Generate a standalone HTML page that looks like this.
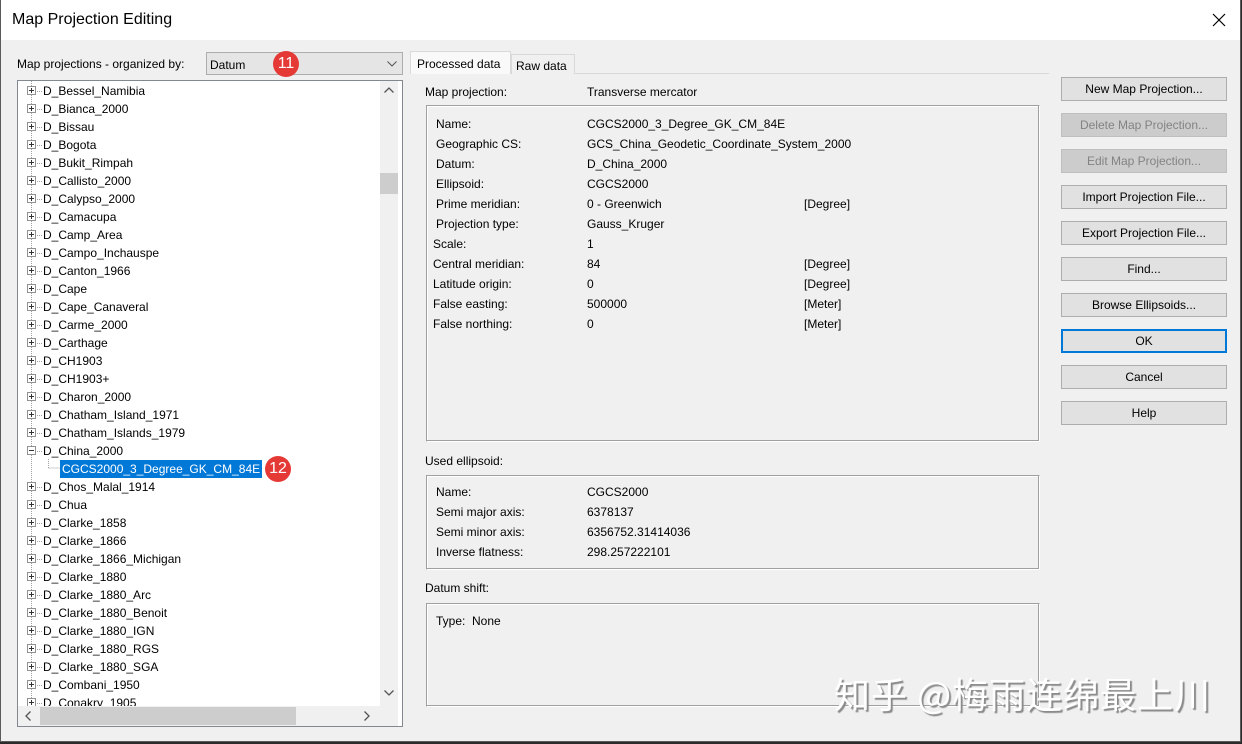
<!DOCTYPE html>
<html><head><meta charset="utf-8"><style>
*{margin:0;padding:0;box-sizing:border-box}
body{width:1242px;height:744px;overflow:hidden;background:#2b2b2b;font-family:"Liberation Sans","Noto Sans CJK SC",sans-serif;font-size:12px;color:#000;position:relative}
.dlg{position:absolute;left:0;top:0;width:1241px;height:742px;background:#f0f0f0}
.title{position:absolute;left:0;top:0;width:1240px;height:40px;background:#fff}
.title span{position:absolute;left:12px;top:11px;font-size:16px}
.a{position:absolute;white-space:nowrap}
.tree{position:absolute;left:17px;top:80px;width:386px;height:647px;border:1px solid #828790;background:#fff;overflow:hidden}
.row{position:absolute;left:25px;height:18px;line-height:19px}
.pb{position:absolute;width:9px;height:9px;border:1px solid #919191;background:#fff}
.pb:before{content:"";position:absolute;left:1px;top:3px;width:5px;height:1px;background:#333}
.pb.p:after{content:"";position:absolute;left:3px;top:1px;width:1px;height:5px;background:#333}
.vs{position:absolute;left:362px;top:0;width:18px;height:625px;background:#f0f0f0}
.hs{position:absolute;left:0;top:625px;width:380px;height:20px;background:#f0f0f0}
.btn{position:absolute;left:1061px;width:166px;height:24px;border:1px solid #adadad;background:#e1e1e1;text-align:center;line-height:23px}
.dis{color:#838383;border-color:#bfbfbf;background:#cccccc}
.box{position:absolute;border:1px solid #a0a0a0;border-right-color:#fff;border-bottom-color:#fff;box-shadow:inset -1px -1px 0 #a0a0a0, inset 1px 1px 0 #fff}
</style></head><body>
<div class="dlg">
<div class="title"><span>Map Projection Editing</span>
<svg class="a" style="left:1212px;top:13px" width="14" height="14"><path d="M1 1L13 13M13 1L1 13" stroke="#000" stroke-width="1.2"/></svg></div>

<div class="a" style="left:17px;top:57px">Map projections - organized by:</div>
<div class="a" style="left:206px;top:52px;width:197px;height:23px;border:1px solid #adadad;background:#e5e5e5"><span class="a" style="left:3px;top:5px">Datum</span>
<svg class="a" style="left:180px;top:8px" width="10" height="6"><path d="M0.5 0.5L5 5L9.5 0.5" stroke="#555" fill="none"/></svg></div>
<div class="a" style="left:273px;top:51px;width:26px;height:26px;border-radius:13px;background:#e53935;color:#fff;font-size:16px;text-align:center;line-height:26px">11</div>

<div class="tree">
<svg class="a" style="left:0;top:0" width="60" height="647">
<line x1="13.5" y1="0" x2="13.5" y2="625" stroke="#a0a0a0" stroke-dasharray="1,1"/>
<line x1="30.5" y1="387" x2="30.5" y2="378" stroke="#a0a0a0" stroke-dasharray="1,1"/>
<line x1="30.5" y1="387" x2="42" y2="387" stroke="#a0a0a0" stroke-dasharray="1,1"/>
</svg>
<div id="rows"></div>
<div class="vs"><svg class="a" style="left:4px;top:6px" width="10" height="6"><path d="M0.5 5.5L5 1L9.5 5.5" stroke="#555" fill="none" stroke-width="1.3"/></svg>
<div class="a" style="left:0;top:92px;width:18px;height:21px;background:#cdcdcd"></div>
<svg class="a" style="left:4px;top:609px" width="10" height="6"><path d="M0.5 0.5L5 5L9.5 0.5" stroke="#555" fill="none" stroke-width="1.3"/></svg></div>
<div class="hs"><svg class="a" style="left:7px;top:5px" width="6" height="10"><path d="M5.5 0.5L1 5L5.5 9.5" stroke="#555" fill="none" stroke-width="1.3"/></svg>
<div class="a" style="left:22px;top:1px;width:256px;height:18px;background:#cdcdcd"></div>
<svg class="a" style="left:346px;top:5px" width="6" height="10"><path d="M0.5 0.5L5 5L0.5 9.5" stroke="#555" fill="none" stroke-width="1.3"/></svg></div>
</div>
<div class="a" style="left:265px;top:456px;width:26px;height:26px;border-radius:13px;background:#e53935;color:#fff;font-size:16px;text-align:center;line-height:26px">12</div>

<div class="a" style="left:410px;top:73px;width:639px;height:653px;border-top:1px solid #d9d9d9"></div>
<div class="a" style="left:410px;top:51px;width:101px;height:23px;background:#f9f9f9;border:1px solid #d9d9d9;border-bottom:none;padding:5px 0 0 6px">Processed data</div>
<div class="a" style="left:511px;top:54px;width:64px;height:20px;background:#f0f0f0;border:1px solid #d9d9d9;border-bottom:none;padding:4px 0 0 4px">Raw data</div>

<div class="a" style="left:425px;top:85px">Map projection:</div>
<div class="a" style="left:587px;top:85px">Transverse mercator</div>
<div class="box" style="left:426px;top:105px;width:614px;height:337px"></div>
<div id="p1"></div>
<div class="a" style="left:425px;top:454px">Used ellipsoid:</div>
<div class="box" style="left:426px;top:475px;width:614px;height:95px"></div>
<div class="a" style="left:425px;top:581px">Datum shift:</div>
<div class="box" style="left:426px;top:603px;width:614px;height:104px"></div>
<div class="a" style="left:436px;top:614px">Type:&nbsp; None</div>

<div class="btn" style="top:77px">New Map Projection...</div>
<div class="btn dis" style="top:113px">Delete Map Projection...</div>
<div class="btn dis" style="top:149px">Edit Map Projection...</div>
<div class="btn" style="top:185px">Import Projection File...</div>
<div class="btn" style="top:221px">Export Projection File...</div>
<div class="btn" style="top:257px">Find...</div>
<div class="btn" style="top:293px">Browse Ellipsoids...</div>
<div class="btn" style="top:329px;border:2px solid #0078d7;line-height:21px">OK</div>
<div class="btn" style="top:365px">Cancel</div>
<div class="btn" style="top:401px">Help</div>

<div class="a" style="left:834px;top:670px;font-size:36px;color:#fff;text-shadow:2px 2px 1px #8a8a8a;letter-spacing:1px;font-family:'Noto Sans CJK SC',sans-serif;line-height:46px">知乎 @梅雨连绵最上川</div>
</div>
<div class="a" style="left:0;top:0;width:1px;height:742px;background:#5a5a5a"></div>
<div class="a" style="left:1240px;top:0;width:1px;height:742px;background:#5a5a5a"></div>
<div class="a" style="left:0;top:741px;width:1241px;height:1px;background:#5a5a5a"></div>
<script>
var n=["Bessel_Namibia","Bianca_2000","Bissau","Bogota","Bukit_Rimpah","Callisto_2000","Calypso_2000","Camacupa","Camp_Area","Campo_Inchauspe","Canton_1966","Cape","Cape_Canaveral","Carme_2000","Carthage","CH1903","CH1903+","Charon_2000","Chatham_Island_1971","Chatham_Islands_1979","China_2000","#","Chos_Malal_1914","Chua","Clarke_1858","Clarke_1866","Clarke_1866_Michigan","Clarke_1880","Clarke_1880_Arc","Clarke_1880_Benoit","Clarke_1880_IGN","Clarke_1880_RGS","Clarke_1880_SGA","Combani_1950","Conakry_1905"];
var h="";
n.forEach(function(s,i){var t=1+18*i;
if(s=="#"){h+='<div class="a" style="left:42px;top:'+t+'px;height:18px;line-height:19px;background:#0078d7;color:#fff;padding:0 2px">CGCS2000_3_Degree_GK_CM_84E</div>';return;}
h+='<div class="pb'+(i==20?'':' p')+'" style="left:9px;top:'+(t+4)+'px"></div><div class="a" style="left:19px;top:'+(t+9)+'px;width:5px;border-top:1px dotted #a0a0a0"></div><div class="row" style="top:'+t+'px">D_'+s+'</div>';});
document.getElementById("rows").innerHTML=h;
var p=[["Name:","CGCS2000_3_Degree_GK_CM_84E","",436],["Geographic CS:","GCS_China_Geodetic_Coordinate_System_2000","",436],["Datum:","D_China_2000","",436],["Ellipsoid:","CGCS2000","",436],["Prime meridian:","0 - Greenwich","[Degree]",436],["Projection type:","Gauss_Kruger","",436],["Scale:","1","",433],["Central meridian:","84","[Degree]",433],["Latitude origin:","0","[Degree]",433],["False easting:","500000","[Meter]",433],["False northing:","0","[Meter]",433]];
var e=[["Name:","CGCS2000"],["Semi major axis:","6378137"],["Semi minor axis:","6356752.31414036"],["Inverse flatness:","298.257222101"]];
h="";p.forEach(function(r,i){var t=117+20*i;h+='<div class="a" style="left:'+r[3]+'px;top:'+t+'px">'+r[0]+'</div><div class="a" style="left:587px;top:'+t+'px">'+r[1]+'</div><div class="a" style="left:804px;top:'+t+'px">'+r[2]+'</div>';});
e.forEach(function(r,i){var t=485+20*i;h+='<div class="a" style="left:436px;top:'+t+'px">'+r[0]+'</div><div class="a" style="left:587px;top:'+t+'px">'+r[1]+'</div>';});
document.getElementById("p1").innerHTML=h;
</script>
</body></html>
